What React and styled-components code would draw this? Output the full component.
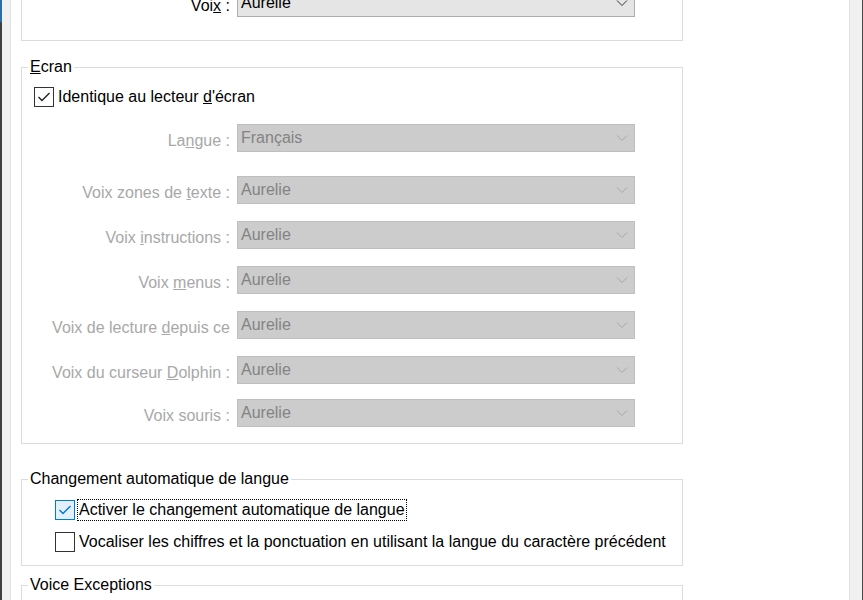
import styled, { createGlobalStyle } from 'styled-components';

const GlobalStyle = createGlobalStyle`
  html, body {
    margin: 0;
    padding: 0;
    background: #ffffff;
  }
  body {
    font-family: "Liberation Sans", Arial, sans-serif;
    font-size: 16px;
    color: #000;
  }
`;

const Window = styled.div`
  display: flex;
  width: 863px;
  height: 600px;
  overflow: hidden;
`;

const LeftEdge = styled.div`
  width: 2px;
  flex-shrink: 0;
  background: linear-gradient(to bottom, #2b6da8 0, #2b6da8 22px, #3f3f3f 22px);
`;

const SideGutter = styled.div`
  width: ${(p) => p.$w}px;
  flex-shrink: 0;
  background: #f0f0f0;
  border-left: ${(p) => (p.$lineLeft ? '1px solid #e2e2e2' : 'none')};
  border-right: ${(p) => (p.$lineRight ? '1px solid #e2e2e2' : 'none')};
`;

const RightEdge = styled.div`
  width: 1px;
  flex-shrink: 0;
  background: #4a4a4a;
`;

const Panel = styled.main`
  flex: 1;
  background: #fff;
  padding-left: 10px;
`;

const Group = styled.fieldset`
  width: 662px;
  box-sizing: border-box;
  margin: ${(p) => p.$mt}px 0 0 0;
  padding: 0;
  border: 1px solid #dcdcdc;
  border-top: ${(p) => (p.$noTop ? 'none' : '1px solid #dcdcdc')};
  min-width: 0;
`;

const Legend = styled.legend`
  margin-left: 6px;
  padding: 0 2px;
  line-height: 18px;
  height: 18px;
  font-size: 16px;
  color: #000;
`;

const Inner = styled.div`
  display: flex;
  flex-direction: column;
  padding: ${(p) => p.$pt}px 0 ${(p) => p.$pb}px ${(p) => p.$pl}px;
`;

const Row = styled.div`
  display: flex;
  align-items: flex-start;
  height: 28px;
  margin-top: ${(p) => p.$mt || 0}px;
`;

const Label = styled.span`
  width: 208px;
  margin-top: 7px;
  margin-right: 7px;
  text-align: right;
  white-space: nowrap;
  overflow: hidden;
  line-height: 20px;
  color: ${(p) => (p.$disabled ? '#a8a8a8' : '#000')};
`;

const Combo = styled.div`
  width: 387px;
  height: 26px;
  display: flex;
  align-items: center;
  justify-content: space-between;
  padding: 0 6px 0 3px;
  border: 1px solid ${(p) => (p.$disabled ? '#bfbfbf' : '#adadad')};
  background: ${(p) => (p.$disabled ? '#cccccc' : '#e5e5e5')};
  color: ${(p) => (p.$disabled ? '#838383' : '#000')};
  line-height: 20px;
`;

const Chevron = ({ color }) => (
  <svg width="12" height="8" viewBox="0 0 12 8">
    <path d="M1 1.5 L6 6.5 L11 1.5" fill="none" stroke={color} strokeWidth="1" />
  </svg>
);

const CheckRow = styled.label`
  display: flex;
  align-items: center;
  height: ${(p) => p.$h || 20}px;
  margin-top: ${(p) => p.$mt || 0}px;
  white-space: nowrap;
`;

const Box = styled.span`
  width: 18px;
  height: 18px;
  flex-shrink: 0;
  display: inline-flex;
  align-items: center;
  justify-content: center;
  border: 1px solid ${(p) => (p.$blue ? '#0078d7' : '#333333')};
  background: ${(p) => (p.$blue ? '#e3effb' : '#ffffff')};
  margin-right: 2px;
`;

const CheckText = styled.span`
  line-height: 20px;
  padding: 0 1px;
  border: 1px dotted ${(p) => (p.$focus ? '#000' : 'transparent')};
`;

const Tick = ({ color }) => (
  <svg width="14" height="12" viewBox="0 0 14 12">
    <path d="M1.5 6 L5 9.5 L12.5 2" fill="none" stroke={color} strokeWidth="1.4" />
  </svg>
);

const voiceRows = [
  { label: <>Voix zones de <u>t</u>exte :</>, mt: 24 },
  { label: <>Voix <u>i</u>nstructions :</>, mt: 17 },
  { label: <>Voix <u>m</u>enus :</>, mt: 17 },
  { label: <>Voix de lecture <u>d</u>epuis ce</>, mt: 17 },
  { label: <>Voix du curseur <u>D</u>olphin :</>, mt: 17 },
  { label: <>Voix souris :</>, mt: 15 },
];

const DisabledRows = styled.div`
  display: flex;
  flex-direction: column;
  margin-left: -12px;
`;

const App = () => {
  return (
    <>
      <GlobalStyle />
      <Window>
        <LeftEdge />
        <SideGutter $w={8} $lineRight />
        <Panel>
          <Group $noTop $mt={-11}>
            <Inner $pt={0} $pb={23} $pl={0}>
              <Row>
                <Label>
                  Voi<u>x</u> :
                </Label>
                <Combo>
                  <span>Aurelie</span>
                  <Chevron color="#333" />
                </Combo>
              </Row>
            </Inner>
          </Group>

          <Group $mt={17}>
            <Legend>
              <u>E</u>cran
            </Legend>
            <Inner $pt={11} $pb={16} $pl={12}>
              <CheckRow>
                <Box>
                  <Tick color="#222" />
                </Box>
                <CheckText>
                  Identique au lecteur <u>d</u>'écran
                </CheckText>
              </CheckRow>
              <DisabledRows>
                <Row $mt={17}>
                  <Label $disabled>
                    La<u>n</u>gue :
                  </Label>
                  <Combo $disabled>
                    <span>Français</span>
                    <Chevron color="#a8a8a8" />
                  </Combo>
                </Row>
                {voiceRows.map((r, i) => (
                  <Row key={i} $mt={r.mt}>
                    <Label $disabled>{r.label}</Label>
                    <Combo $disabled>
                      <span>Aurelie</span>
                      <Chevron color="#a8a8a8" />
                    </Combo>
                  </Row>
                ))}
              </DisabledRows>
            </Inner>
          </Group>

          <Group $mt={26}>
            <Legend>Changement automatique de langue</Legend>
            <Inner $pt={10} $pb={11} $pl={33}>
              <CheckRow $h={24}>
                <Box $blue>
                  <Tick color="#0078d7" />
                </Box>
                <CheckText $focus>Activer le changement automatique de langue</CheckText>
              </CheckRow>
              <CheckRow $h={24} $mt={8}>
                <Box />
                <CheckText>
                  Vocaliser les chiffres et la ponctuation en utilisant la langue du caractère précédent
                </CheckText>
              </CheckRow>
            </Inner>
          </Group>

          <Group $mt={10}>
            <Legend>Voice Exceptions</Legend>
            <Inner $pt={40} $pb={10} $pl={12} />
          </Group>
        </Panel>
        <SideGutter $w={12} $lineLeft />
        <RightEdge />
      </Window>
    </>
  );
};

export default App;
